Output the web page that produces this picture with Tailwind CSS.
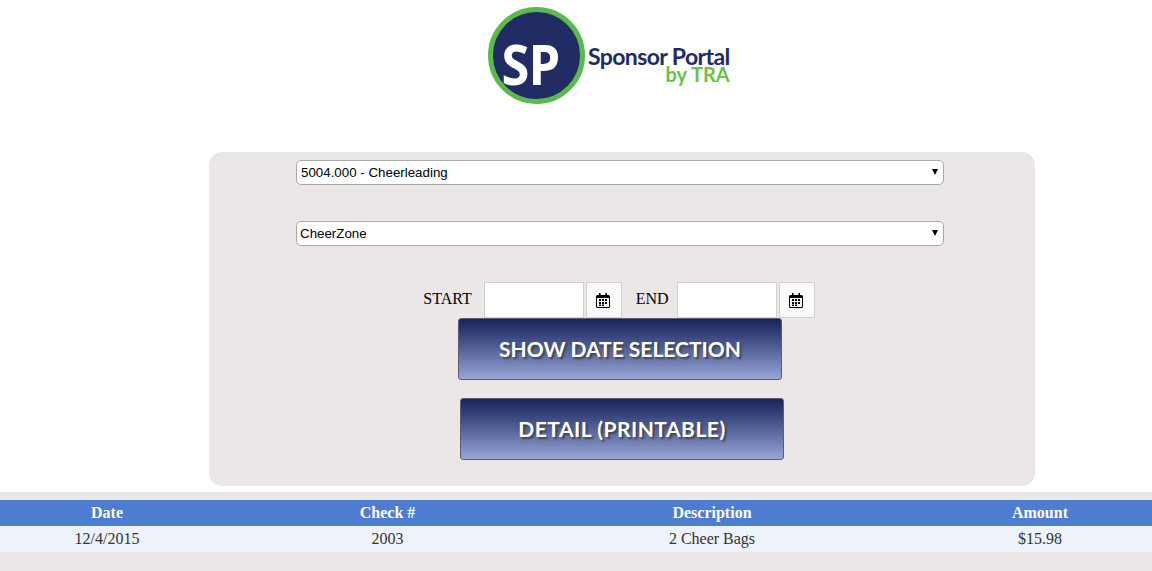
<!DOCTYPE html>
<html lang="en">
<head>
  <meta charset="UTF-8" />
  <title>Sponsor Portal</title>
  <script src="https://cdn.jsdelivr.net/npm/@tailwindcss/browser@4"></script>
</head>
<body class="bg-white h-[571px] overflow-hidden font-['Liberation_Serif',serif]">
  <header class="h-[152px] flex justify-center">
    <div class="flex items-start w-[244px] ml-[68px] pt-[7px]">
      <div class="w-[97px] h-[97px] shrink-0 rounded-full bg-[#212c64] border-[5px] border-[#5cb94d] flex items-center justify-center pt-[16px] pr-[12px] text-white font-['Open_Sans',sans-serif] font-bold text-[55px] tracking-[-1px] leading-none"><span class="scale-x-[.92]">SP</span></div>
      <div class="ml-[3px] mt-[41px] font-['Lato',sans-serif]">
        <div class="text-[#212c64] text-[23px] leading-[17px] font-bold tracking-[-0.6px] whitespace-nowrap">Sponsor Portal</div>
        <div class="text-[#6cc04a] text-[20px] leading-[18px] font-bold text-right">by TRA</div>
      </div>
    </div>
  </header>

  <main class="ml-[209px] w-[826px] h-[334px] bg-[#ebe7e7] rounded-[13px] flex flex-col items-center pt-[8px]">
    <div class="relative w-[648px] h-[25px] -ml-[4px]">
      <select class="block appearance-none w-full h-full bg-white border border-[#a9a9a9] rounded-[5px] pl-[4px] text-[13.333px] text-black font-['Liberation_Sans',sans-serif]">
        <option>5004.000 - Cheerleading</option>
      </select>
      <span class="absolute right-[6px] top-[9px] w-0 h-0 border-x-[3.5px] border-x-transparent border-t-[6px] border-t-black"></span>
    </div>
    <div class="relative w-[648px] h-[25px] mt-[36px] -ml-[4px]">
      <select class="block appearance-none w-full h-full bg-white border border-[#a9a9a9] rounded-[5px] pl-[3px] text-[13.333px] text-black font-['Liberation_Sans',sans-serif]">
        <option>CheerZone</option>
      </select>
      <span class="absolute right-[6px] top-[9px] w-0 h-0 border-x-[3.5px] border-x-transparent border-t-[6px] border-t-black"></span>
    </div>

    <div class="flex items-start h-[36px] mt-[36px] -ml-[6px] text-[16px] text-black">
      <span class="mt-[5px] mr-[12px]">START</span>
      <input type="text" class="w-[100px] h-[36px] bg-white border border-[#d3d0d0]" />
      <button class="w-[36px] h-[36px] ml-[2px] pr-[1px] bg-[#f9f9f9] border border-[#d3d0d0] flex items-center justify-center">
        <svg class="w-[14px] h-[15px]" viewBox="0 0 14 15"><path fill="#000" d="M3 0h1.500v2h5V0H11v2h1.500A1.500 1.500 0 0 1 14 3.500v10a1.500 1.500 0 0 1-1.500 1.500h-11A1.500 1.500 0 0 1 0 13.500v-10A1.500 1.500 0 0 1 1.500 2H3z"/><path fill="#fff" d="M1 5h12v8.500a.5.5 0 0 1-.5.5h-11a.5.5 0 0 1-.5-.5z"/><path fill="#000" d="M3 6h2v2H3zM6 6h2v2H6zM9 6h2v2H9zM3 9h2v2H3zM6 9h2v2H6zM9 9h2v2H9zM3 11.500h2v1.500H3zM6 11.500h2v1.500H6z"/></svg>
      </button>
      <span class="mt-[5px] ml-[14px] mr-[8px]">END</span>
      <input type="text" class="w-[100px] h-[36px] bg-white border border-[#d3d0d0]" />
      <button class="w-[36px] h-[36px] ml-[2px] pr-[1px] bg-[#f9f9f9] border border-[#d3d0d0] flex items-center justify-center">
        <svg class="w-[14px] h-[15px]" viewBox="0 0 14 15"><path fill="#000" d="M3 0h1.500v2h5V0H11v2h1.500A1.500 1.500 0 0 1 14 3.500v10a1.500 1.500 0 0 1-1.500 1.500h-11A1.500 1.500 0 0 1 0 13.500v-10A1.500 1.500 0 0 1 1.500 2H3z"/><path fill="#fff" d="M1 5h12v8.500a.5.5 0 0 1-.5.5h-11a.5.5 0 0 1-.5-.5z"/><path fill="#000" d="M3 6h2v2H3zM6 6h2v2H6zM9 6h2v2H9zM3 9h2v2H3zM6 9h2v2H6zM9 9h2v2H9zM3 11.500h2v1.500H3zM6 11.500h2v1.500H6z"/></svg>
      </button>
    </div>

    <button class="block w-[324px] h-[62px] -ml-[4px] bg-gradient-to-b from-[#19235b] to-[#9aa6d8] border border-[#5f5f6b] rounded-[3px] text-white text-[21px] font-['Lato',sans-serif] font-bold [text-shadow:2px_2px_2px_#444]">SHOW DATE SELECTION</button>
    <button class="block w-[324px] h-[62px] mt-[18px] bg-gradient-to-b from-[#19235b] to-[#9aa6d8] border border-[#5f5f6b] rounded-[3px] text-white text-[21px] tracking-[0.5px] font-['Lato',sans-serif] font-bold [text-shadow:2px_2px_2px_#444]">DETAIL (PRINTABLE)</button>
  </main>

  <section class="mt-[6px] h-[79px] bg-[#ebe7e7] pt-[8px]">
    <table class="w-full border-collapse text-[16px] table-fixed">
      <thead>
        <tr class="h-[26px] bg-[#4f7bd1] text-white font-bold">
          <th class="w-[214px]">Date</th>
          <th class="w-[347px]">Check #</th>
          <th class="w-[302px]">Description</th>
          <th class="pl-[65px]">Amount</th>
        </tr>
      </thead>
      <tbody>
        <tr class="h-[26px] bg-[#edf2fb] text-[#333] text-center">
          <td>12/4/2015</td>
          <td>2003</td>
          <td>2 Cheer Bags</td>
          <td class="pl-[65px]">$15.98</td>
        </tr>
      </tbody>
    </table>
  </section>
</body>
</html>
